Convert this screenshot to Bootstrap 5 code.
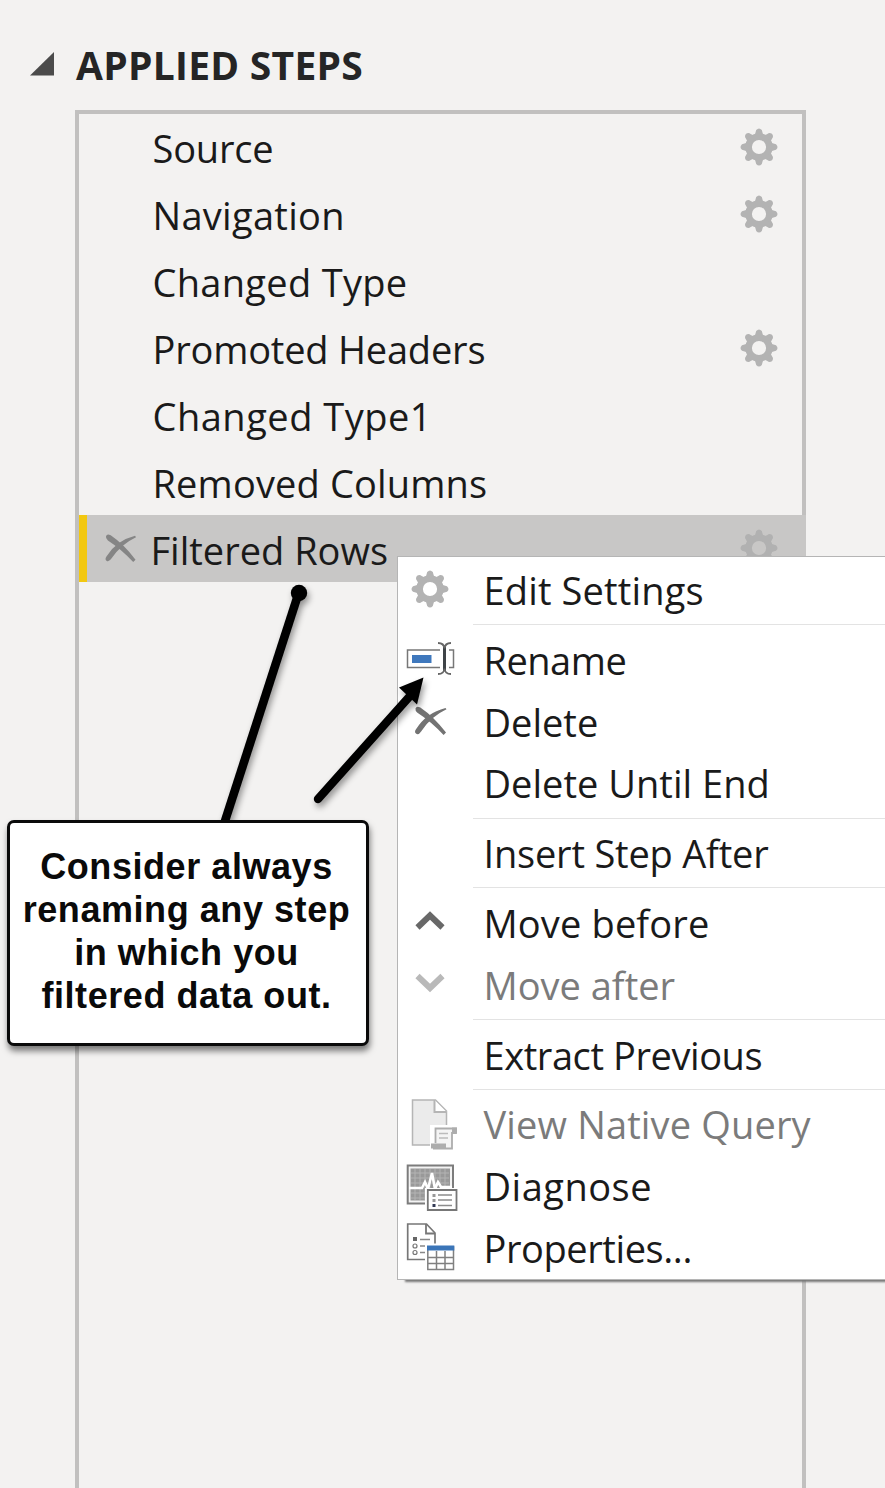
<!DOCTYPE html>
<html lang="en">
<head>
<meta charset="utf-8">
<meta name="viewport" content="width=device-width, initial-scale=1">
<title>Applied Steps</title>
<link href="https://cdn.jsdelivr.net/npm/bootstrap@5.3.0/dist/css/bootstrap.min.css" rel="stylesheet">
<style>
body{background:#f3f2f1;font-family:"Open Sans","Noto Sans",sans-serif;color:#1a1a1a;height:1488px;overflow:hidden}
.pane{height:1488px}
.pane-title{height:110px;padding:22px 0 0 30px}
.pane-title h1{font-size:39px;font-weight:700;line-height:86px;letter-spacing:.27px;color:#252525;margin-left:22px;white-space:nowrap}
.steps{margin-left:75px;width:731px;height:1400px;border:4px solid #c1c0bf}
.step{height:67px;padding-left:73.5px;padding-right:23px;font-size:38px;line-height:69px;white-space:nowrap}
.step svg{margin-top:12.5px}
.step.picked{background:#c8c7c6;border-left:8px solid #f2c811;padding-left:18px;margin-top:-1px;margin-right:-4px;padding-right:27px;line-height:71px}
.step.picked .cross{margin-right:13.5px;margin-top:18px}
.step.picked .cog{filter:brightness(.97);opacity:.85}
.ctx{left:397px;top:556px;width:520px;height:724px;background:#fff;border:1px solid #b5b5b5;padding-top:3px;box-shadow:7px 3px 2px -1px #777}
.ctx-item{height:61.8px;font-size:38px;line-height:61.2px;white-space:nowrap}
.ctx-icon{width:64px;height:61.8px;margin-right:21.5px;line-height:0}
.off{color:#7b7b7b}
.rule{height:1px;background:#e3e3e3;margin:2.4px 0 4.6px 75px}
.note{left:7px;top:820px;width:362px;height:226px;background:#fff;border:3px solid #0a0a0a;border-radius:7px;box-shadow:1px 5px 6px rgba(0,0,0,.5);font:700 36px/43px "Liberation Sans",Arial,sans-serif;letter-spacing:.56px;color:#0a0a0a;padding:22px 3px 0 0}
.arrows{left:200px;top:570px;filter:drop-shadow(2px 4px 3px rgba(0,0,0,.4))}
.t-m5{letter-spacing:-.5px}.t-m4{letter-spacing:-.42px}.t-m2{letter-spacing:-.2px}
.t-0{letter-spacing:.03px}.t-1{letter-spacing:.15px}.t-3{letter-spacing:.3px}.t-5{letter-spacing:.5px}
</style>
</head>
<body>
<svg width="0" height="0" class="position-absolute">
<defs>
<symbol id="cog" viewBox="-20 -20 40 40">
<circle r="10.4" fill="none" stroke="#b3b3b3" stroke-width="6.6"/>
<g fill="#b3b3b3">
<path id="tooth" d="M-4.2-12L-2.8-17Q0-20 2.8-17L4.2-12Z"/>
<use href="#tooth" transform="rotate(45)"/><use href="#tooth" transform="rotate(90)"/><use href="#tooth" transform="rotate(135)"/>
<use href="#tooth" transform="rotate(180)"/><use href="#tooth" transform="rotate(225)"/><use href="#tooth" transform="rotate(270)"/><use href="#tooth" transform="rotate(315)"/>
</g>
</symbol>
<symbol id="cross" viewBox="0 0 34 32">
<path d="M1 3.5Q2 .5 6 2.5Q20 12 32.5 28.5L30 31Q17 17 3 8Q.5 6 1 3.5Z"/>
<path d="M1.5 25Q12 8 32 3L33 4.5Q17 12 7 27Q4 31.500 1.500 29.500Q-.5 28 1.500 25Z"/>
</symbol>
</defs>
</svg>
<main class="pane position-relative overflow-hidden">
<div class="pane-title d-flex"><svg width="24" height="80" viewBox="0 0 24 80"><path d="M0 53.500H24V30Z" fill="#4b4b4b"/></svg><h1>APPLIED STEPS</h1></div>
<div class="steps">
<div class="step d-flex justify-content-between"><span class="t-m2">Source</span><svg class="cog" width="40" height="40"><use href="#cog"/></svg></div>
<div class="step d-flex justify-content-between"><span class="t-3">Navigation</span><svg class="cog" width="40" height="40"><use href="#cog"/></svg></div>
<div class="step"><span class="t-3">Changed Type</span></div>
<div class="step d-flex justify-content-between"><span class="t-m2">Promoted Headers</span><svg class="cog" width="40" height="40"><use href="#cog"/></svg></div>
<div class="step"><span class="t-5">Changed Type1</span></div>
<div class="step"><span class="t-1">Removed Columns</span></div>
<div class="step picked d-flex"><svg class="cross" width="32" height="30" fill="#858585"><use href="#cross"/></svg><span>Filtered Rows</span><svg class="cog ms-auto" width="40" height="40"><use href="#cog"/></svg></div>
</div>

<div class="ctx position-absolute">
<div class="ctx-item d-flex"><div class="ctx-icon"><svg width="64" height="61" viewBox="0 0 64 61"><use href="#cog" x="12" y="9" width="40" height="40"/></svg></div><span class="t-1">Edit Settings</span></div>
<div class="rule"></div>
<div class="ctx-item d-flex"><div class="ctx-icon">
<svg width="64" height="61" viewBox="0 0 64 61" fill="none"><path d="M42 20H9.500V37.500H42M51 20H55.500V37.500H51" stroke="#777" stroke-width="1.500"/><path d="M14 25H33.500V33H14Z" fill="#3f78bd"/><path d="M46.500 17V41" stroke="#3f4448" stroke-width="3"/><path d="M40 13Q46 13 46.500 18.500Q47 13 53 13M40 44Q46 44 46.500 38.500Q47 44 53 44" stroke="#666" stroke-width="1.800"/></svg></div><span class="t-m5">Rename</span></div>
<div class="ctx-item d-flex"><div class="ctx-icon"><svg width="64" height="61" viewBox="0 0 64 61" fill="#737373"><use href="#cross" x="16.5" y="13" width="33" height="31"/></svg></div><span>Delete</span></div>
<div class="ctx-item d-flex"><div class="ctx-icon"></div><span class="t-0">Delete Until End</span></div>
<div class="rule"></div>
<div class="ctx-item d-flex"><div class="ctx-icon"></div><span class="t-m2">Insert Step After</span></div>
<div class="rule"></div>
<div class="ctx-item d-flex"><div class="ctx-icon"><svg width="64" height="61" viewBox="0 0 64 61" fill="none"><path d="M19.500 34.500L32 22.500L44.500 34.500" stroke="#686868" stroke-width="6"/></svg></div><span class="t-1">Move before</span></div>
<div class="ctx-item d-flex off"><div class="ctx-icon"><svg width="64" height="61" viewBox="0 0 64 61" fill="none"><path d="M19.500 21L32 33L44.500 21" stroke="#b9b9b9" stroke-width="6"/></svg></div><span>Move after</span></div>
<div class="rule"></div>
<div class="ctx-item d-flex"><div class="ctx-icon"></div><span class="t-m4">Extract Previous</span></div>
<div class="rule"></div>
<div class="ctx-item d-flex off"><div class="ctx-icon">
<svg width="64" height="61" viewBox="0 0 64 61"><path d="M14.500 6H37.500L48.500 17V51H14.500Z" fill="#ebebeb" stroke="#b5b5b5" stroke-width="1.500"/><path d="M36.500 6V18H48.500" fill="#fff" stroke="#b5b5b5" stroke-width="2"/><path d="M32 56V31H64V56Z" fill="#fff"/><path d="M37.500 49V34.500H58V39H54V54.500H35" fill="#f4f4f4" stroke="#adadad" stroke-width="1.800"/><path d="M54 33.500H59V39H54ZM33 49.500H48V54.500H33Z" fill="#adadad"/><path d="M41 39.500H50M41 44H50" stroke="#bbb" stroke-width="1.600"/></svg></div><span class="t-1">View Native Query</span></div>
<div class="ctx-item d-flex"><div class="ctx-icon">
<svg width="64" height="61" viewBox="0 0 64 61"><path d="M9.700 9.500H55V47.500H9.700Z" fill="#f3f3f3" stroke="#7c7c7c" stroke-width="2"/><path d="M12.500 12.500H52V44.500H12.500Z" fill="#999"/><path d="M17 13V44M22 13V44M27 13V44M32 13V44M37 13V44M42 13V44M47 13V44M13 17H51M13 22H51M13 27H51M13 37H51M13 42H51" stroke="#b3b3b3" stroke-width="1"/><path d="M11 32H24L27 26L30 33L34 17L37 33L40 26L43 31H54" fill="none" stroke="#fff" stroke-width="2.600"/><path d="M27 32H62V59H27Z" fill="#fff"/><path d="M29.800 34H58.500V54H29.800Z" fill="#fff" stroke="#777" stroke-width="1.800"/><path d="M40 39H54M40 44H54M40 49.500H54" stroke="#8c8c8c" stroke-width="1.400"/><path d="M34.500 38H37.500V41H34.500ZM34.500 43H37.500V46H34.500Z" fill="#999"/><path d="M34.500 48H37.500V51H34.500Z" fill="#333a55"/></svg></div><span class="t-5">Diagnose</span></div>
<div class="ctx-item d-flex"><div class="ctx-icon">
<svg width="64" height="61" viewBox="0 0 64 61"><path d="M9.700 6H28.500L37 15V41.500H9.700Z" fill="#fff" stroke="#777" stroke-width="1.700"/><path d="M28 6V15.500H37" fill="none" stroke="#777" stroke-width="1.800"/><path d="M15 19H19V23H15Z" fill="#666"/><path d="M22 21.500H32M22 28H29M22 34.500H27" stroke="#888" stroke-width="1.500"/><circle cx="17" cy="28" r="2" fill="none" stroke="#777" stroke-width="1.200"/><circle cx="17" cy="34.500" r="2" fill="none" stroke="#777" stroke-width="1.200"/><path d="M27 25.500H60V55H27Z" fill="#fff"/><path d="M29.800 29H55.500V51.500H29.800ZM38.500 33V52M47 33V52M29.800 39.500H55.500M29.800 45.500H55.500" fill="none" stroke="#808080" stroke-width="1.500"/><path d="M29 27.500H56.300V32.500H29Z" fill="#3b75b8"/></svg></div><span class="t-m4">Properties...</span></div>
</div>

<svg class="arrows position-absolute" width="260" height="260" viewBox="0 0 260 260"><circle cx="99" cy="23" r="8.200"/><path d="M98 25L24 254" stroke="#000" stroke-width="8.600"/><path d="M118 229L210 126" stroke="#000" stroke-width="8.400" stroke-linecap="round"/><path d="M223.500 107.500L217 134.500L199 117.500Z"/></svg>
<div class="note position-absolute text-center">Consider always<br>renaming any step<br>in which you<br>filtered data out.</div>
</main>
<script src="https://cdn.jsdelivr.net/npm/bootstrap@5.3.0/dist/js/bootstrap.bundle.min.js"></script>
</body>
</html>
